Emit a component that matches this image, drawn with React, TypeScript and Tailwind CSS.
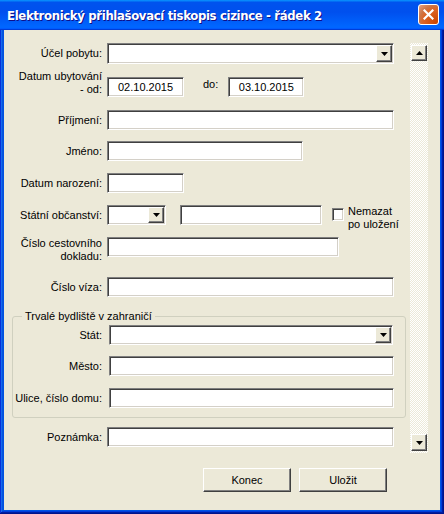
import React from 'react';

const sunken =
  'bg-white border border-t-[#7f7f7f] border-l-[#7f7f7f] border-r-white border-b-white shadow-[inset_1px_1px_0_#404040,inset_-1px_-1px_0_#d4d0c8]';
const raised =
  'bg-[#ece9d8] border border-t-white border-l-white border-r-[#404040] border-b-[#404040] shadow-[inset_-1px_-1px_0_#808080]';

function Arrow({ up = false }: { up?: boolean }) {
  return (
    <svg width="7" height="4" viewBox="0 0 7 4" className={up ? 'rotate-180' : ''}>
      <polygon points="0,0 7,0 3.5,4" fill="#000" />
    </svg>
  );
}

function Combo({ w }: { w: string }) {
  return (
    <div className={`${sunken} ${w} h-full flex justify-end p-[1px]`}>
      <div className={`${raised} w-[16px] h-full flex items-center justify-center`}>
        <Arrow />
      </div>
    </div>
  );
}

function Field({ w, children }: { w: string; children?: React.ReactNode }) {
  return <div className={`${sunken} ${w} h-full flex items-center justify-center`}>{children}</div>;
}

function Row({
  label,
  mt,
  h = 'h-[20px]',
  labelW = 'w-[98px]',
  gap = 'ml-[5px]',
  labelClass = '',
  children,
}: {
  label: React.ReactNode;
  mt: string;
  h?: string;
  labelW?: string;
  gap?: string;
  labelClass?: string;
  children: React.ReactNode;
}) {
  return (
    <div className={`flex items-center ${h} ${mt}`}>
      <div className={`${labelW} shrink-0 text-right ${labelClass}`}>{label}</div>
      <div className={`flex items-center h-full ${gap}`}>{children}</div>
    </div>
  );
}

export default function App() {
  return (
    <div className="w-[444px] h-[514px] bg-[#0054e3] flex flex-col font-['Liberation_Sans',Arial,sans-serif] text-[11px] leading-[13px] text-black shadow-[inset_-1px_-1px_0_#00138c,inset_1px_1px_0_#0831d9,inset_-2px_-2px_0_#001ea0,inset_2px_2px_0_#166aee,inset_-3px_-3px_0_#003bda,inset_3px_3px_0_#0855dd]">
      {/* Title bar */}
      <div className="h-[30px] shrink-0 flex items-center pl-[7px] pr-[5px] bg-[linear-gradient(180deg,#0997ff_0%,#0053ee_8%,#0050ee_40%,#0066ff_88%,#0066ff_93%,#005bff_95%,#003dd7_96%,#003dd7_100%)]">
        <div className="flex-1 text-white font-bold text-[13px] tracking-[-0.35px] font-['Liberation_Sans_Narrow','DejaVu_Sans_Condensed','Liberation_Sans',sans-serif] [text-shadow:1px_1px_0_#0f1089]">
          Elektronický přihlašovací tiskopis cizince - řádek 2
        </div>
        <div className="w-[21px] h-[21px] mb-[1px] rounded-[3px] border border-white bg-[radial-gradient(circle_at_90%_90%,#cc4600_0%,#dc6527_55%,#cd7546_70%,#e7a283_100%)] flex items-center justify-center">
          <svg width="11" height="11" viewBox="0 0 11 11">
            <path d="M1.5 1.5 L9.5 9.5 M9.5 1.5 L1.5 9.5" stroke="#fff" strokeWidth="2.2" strokeLinecap="square" />
          </svg>
        </div>
      </div>

      {/* Client area */}
      <div className="flex-1 mx-[4px] mb-[4px] bg-[#ece9d8] flex flex-col">
        <div className="flex">
          {/* Form */}
          <div className="w-[406px] pt-[13px] flex flex-col">
            <Row label="Účel pobytu:" mt="mt-0" h="h-[21px]">
              <Combo w="w-[287px]" />
            </Row>

            <Row label={<>Datum ubytování<br />- od:</>} mt="mt-[13px]" labelClass="-mt-[9px]">
              <Field w="w-[77px]">02.10.2015</Field>
              <span className="ml-[19px] mr-[10px] -mt-[6px]">do:</span>
              <Field w="w-[76px]">03.10.2015</Field>
            </Row>

            <Row label="Příjmení:" mt="mt-[13px]">
              <Field w="w-[287px]" />
            </Row>

            <Row label="Jméno:" mt="mt-[11px]">
              <Field w="w-[196px]" />
            </Row>

            <Row label="Datum narození:" mt="mt-[12px]">
              <Field w="w-[77px]" />
            </Row>

            <Row label="Státní občanství:" mt="mt-[12px]">
              <Combo w="w-[59px]" />
              <Field w="w-[142px] ml-[14px]" />
              <div className="flex items-start self-start ml-[10px]">
                <div className={`${sunken} w-[12px] h-[13px] mt-[3px] shrink-0`} />
                <div className="ml-[4px] leading-[13px]">
                  Nemazat
                  <br />
                  po uložení
                </div>
              </div>
            </Row>

            <Row label={<>Číslo cestovního<br />dokladu:</>} mt="mt-[12px]" labelClass="mt-[6px]">
              <Field w="w-[232px]" />
            </Row>

            <Row label="Číslo víza:" mt="mt-[20px]">
              <Field w="w-[287px]" />
            </Row>

            <fieldset className="mt-[13px] ml-[8px] w-[394px] border border-[#d0d0bf] rounded-[3px] pb-[9px]">
              <legend className="ml-[9px] px-[3px]">Trvalé bydliště v zahraničí</legend>
              <Row label="Stát:" mt="mt-[2px]" labelW="w-[89px]" gap="ml-[7px]">
                <Combo w="w-[284px]" />
              </Row>
              <Row label="Město:" mt="mt-[11px]" labelW="w-[89px]" gap="ml-[7px]">
                <Field w="w-[285px]" />
              </Row>
              <Row label="Ulice, číslo domu:" mt="mt-[12px]" labelW="w-[89px]" gap="ml-[7px]">
                <Field w="w-[285px]" />
              </Row>
            </fieldset>

            <Row label="Poznámka:" mt="mt-[9px]">
              <Field w="w-[287px]" />
            </Row>
          </div>

          {/* Scrollbar */}
          <div className="mt-[13px] w-[18px] h-[410px] flex flex-col justify-between py-[2px] bg-[repeating-conic-gradient(#ffffff_0%_25%,#ece9d8_0%_50%)] bg-size-[2px_2px]">
            <div className={`${raised} ml-[1px] w-[16px] h-[16px] flex items-center justify-center`}>
              <Arrow up />
            </div>
            <div className={`${raised} ml-[1px] w-[16px] h-[17px] flex items-center justify-center`}>
              <Arrow />
            </div>
          </div>
        </div>

        {/* Buttons */}
        <div className="flex mt-[15px] pl-[199px] gap-[8px]">
          <button className={`${raised} w-[88px] h-[24px] flex items-center justify-center`}>Konec</button>
          <button className={`${raised} w-[88px] h-[24px] flex items-center justify-center`}>Uložit</button>
        </div>
      </div>
    </div>
  );
}
